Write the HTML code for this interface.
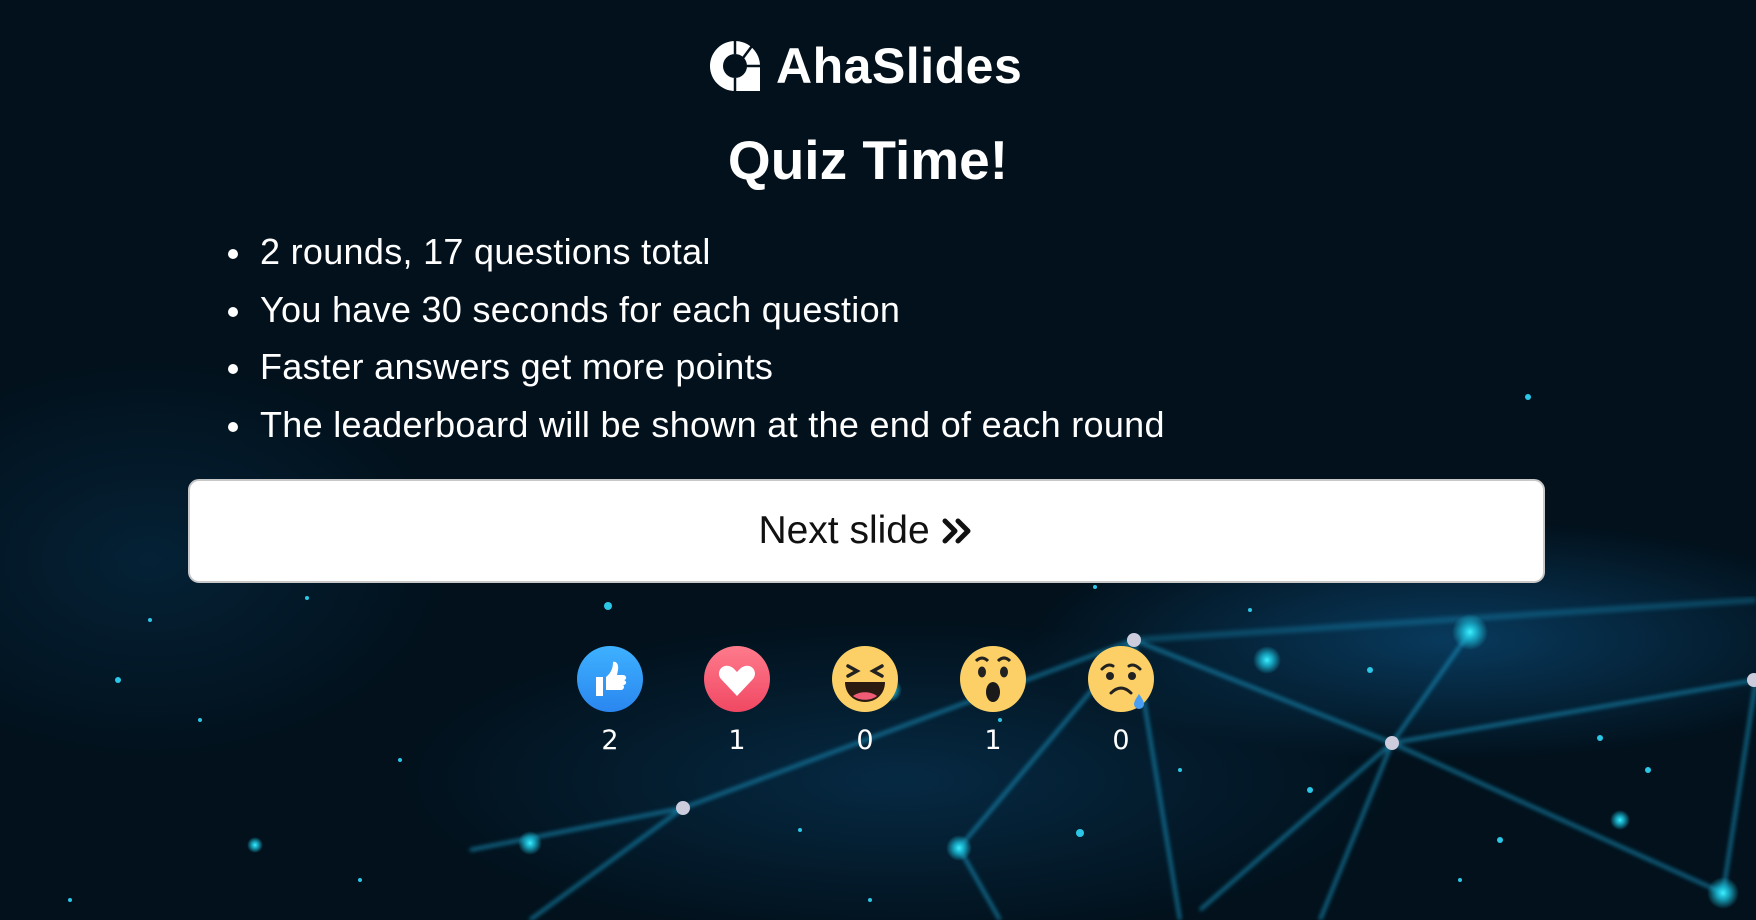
<!DOCTYPE html>
<html><head><meta charset="utf-8"><style>
html,body{margin:0;padding:0}
body{width:1756px;height:920px;overflow:hidden;position:relative;background:#02111c;font-family:"Liberation Sans",sans-serif;color:#fff}
svg.bg{position:absolute;left:0;top:0}
.logo{position:absolute;left:708px;top:36px;height:60px;display:flex;align-items:center}
.logo span{font-size:50px;font-weight:bold;margin-left:14px;letter-spacing:0.5px}
h1{position:absolute;left:0;width:1736px;text-align:center;top:128px;margin:0;font-size:55px;font-weight:bold}
ul{position:absolute;left:228px;top:226px;margin:0;padding:0;list-style:none}
li{font-size:36px;letter-spacing:0.3px;height:57.5px;line-height:52px;position:relative;padding-left:32px}
li:before{content:"";position:absolute;left:0;top:23px;width:10px;height:10px;border-radius:50%;background:#fff}
.btn{position:absolute;left:188px;top:479px;width:1353px;height:100px;background:#fff;border:2px solid #c8c8c8;border-radius:11px;color:#111;font-size:39px;display:flex;align-items:center;justify-content:center}
.em{position:absolute;top:646px;width:66px;height:66px;border-radius:50%}
.cnt{position:absolute;top:725px;width:40px;text-align:center;font-size:27px;font-family:"DejaVu Sans",sans-serif}
</style></head><body>
<svg class="bg" width="1756" height="920">
<defs>
<radialGradient id="g1" cx="0.5" cy="0.5" r="0.5"><stop offset="0" stop-color="#0b4b78" stop-opacity="0.7"/><stop offset="1" stop-color="#0b4b78" stop-opacity="0"/></radialGradient>
<radialGradient id="gd" cx="0.5" cy="0.5" r="0.5"><stop offset="0" stop-color="#3ff0ff"/><stop offset="0.4" stop-color="#1cc4e0" stop-opacity="0.8"/><stop offset="1" stop-color="#1cc4e0" stop-opacity="0"/></radialGradient>
<filter id="bl"><feGaussianBlur stdDeviation="2"/></filter>
</defs>
<ellipse cx="1450" cy="640" rx="420" ry="120" fill="url(#g1)"/>
<ellipse cx="900" cy="780" rx="500" ry="160" fill="url(#g1)" opacity="0.6"/>
<ellipse cx="150" cy="560" rx="300" ry="200" fill="url(#g1)" opacity="0.4"/>
<g stroke="#1fa8d8" stroke-width="3" opacity="0.7" fill="none" filter="url(#bl)">
<line x1="1392" y1="743" x2="1134" y2="640"/>
<line x1="1392" y1="743" x2="1756" y2="680"/>
<line x1="1392" y1="743" x2="1723" y2="893"/>
<line x1="1392" y1="743" x2="1320" y2="920"/>
<line x1="1392" y1="743" x2="1470" y2="632"/>
<line x1="1392" y1="743" x2="1200" y2="910"/>
<line x1="1756" y1="680" x2="1723" y2="893"/>
<line x1="1134" y1="640" x2="683" y2="808"/>
<line x1="1134" y1="640" x2="959" y2="848"/>
<line x1="1134" y1="640" x2="1180" y2="920"/>
<line x1="683" y1="808" x2="530" y2="920"/>
<line x1="683" y1="808" x2="470" y2="850"/>
<line x1="959" y1="848" x2="1000" y2="920"/>
</g>
<line x1="1134" y1="640" x2="1756" y2="600" stroke="#1fa8d8" stroke-width="6" opacity="0.3" filter="url(#bl)"/>
<g fill="url(#gd)">
<circle cx="1470" cy="632" r="18"/><circle cx="1267" cy="660" r="14"/><circle cx="959" cy="848" r="13"/><circle cx="1723" cy="893" r="16"/><circle cx="530" cy="843" r="12"/><circle cx="890" cy="690" r="12"/><circle cx="1620" cy="820" r="10"/><circle cx="255" cy="845" r="8"/>
</g>
<g fill="#ccd">
<circle cx="1392" cy="743" r="7"/><circle cx="1134" cy="640" r="7"/><circle cx="683" cy="808" r="7"/><circle cx="1754" cy="680" r="7"/>
</g>
<g fill="#2bc7e6">
<circle cx="1528" cy="397" r="3"/><circle cx="608" cy="606" r="4"/><circle cx="118" cy="680" r="3"/><circle cx="307" cy="598" r="2"/><circle cx="1095" cy="587" r="2"/><circle cx="1370" cy="670" r="3"/><circle cx="1600" cy="738" r="3"/><circle cx="1310" cy="790" r="3"/><circle cx="1080" cy="833" r="4"/><circle cx="1648" cy="770" r="3"/><circle cx="1500" cy="840" r="3"/><circle cx="800" cy="830" r="2"/><circle cx="400" cy="760" r="2"/><circle cx="200" cy="720" r="2"/><circle cx="70" cy="900" r="2"/><circle cx="1180" cy="770" r="2"/><circle cx="1460" cy="880" r="2"/><circle cx="1250" cy="610" r="2"/><circle cx="1000" cy="720" r="2"/><circle cx="150" cy="620" r="2"/><circle cx="360" cy="880" r="2"/><circle cx="870" cy="900" r="2"/>
</g>
</svg>
<div class="logo"><svg width="54" height="54" viewBox="0 0 54 54"><path d="M27 2A25 25 0 1 0 27 52H52V27A25 25 0 0 0 27 2ZM27 15A12 12 0 1 1 27 39A12 12 0 1 1 27 15Z" fill="#fff" fill-rule="evenodd"/><g stroke="#02111c" stroke-width="2.5"><line x1="27" y1="0" x2="27" y2="15"/><line x1="38" y1="27" x2="54" y2="27"/><line x1="27" y1="39" x2="27" y2="54"/><line x1="35" y1="19" x2="44" y2="7"/></g></svg><span>AhaSlides</span></div>
<h1>Quiz Time!</h1>
<ul>
<li>2 rounds, 17 questions total</li>
<li>You have 30 seconds for each question</li>
<li>Faster answers get more points</li>
<li>The leaderboard will be shown at the end of each round</li>
</ul>
<div class="btn">Next slide&nbsp;<svg width="34" height="30" viewBox="0 0 34 30"><path d="M4 5L14 15L4 25M17 5L27 15L17 25" stroke="#111" stroke-width="5" fill="none" stroke-linecap="round" stroke-linejoin="round"/></svg></div>
<div class="em" style="left:577px;background:linear-gradient(#3eb1ff,#2a86ef)"><svg width="66" height="66"><path d="M19 31h7v19h-7zM29 31c5-4 7-9 7-15 3-1 6 2 5 8l-1 5h6c4 0 4 5 1 5 3 1 3 5-1 5 2 1 1 5-2 5h-15z" fill="#fff"/></svg></div>
<div class="em" style="left:704px;background:linear-gradient(#ff7b8c,#f04863)"><svg width="66" height="66"><path d="M33 50L17 33c-5-6 0-15 8-13 4 1 6 4 8 6 2-2 4-5 8-6 8-2 13 7 8 13z" fill="#fff"/></svg></div>
<div class="em" style="left:832px;background:#fcd066"><svg width="66" height="66"><path d="M16 20l9 5-9 5M50 20l-9 5 9 5" stroke="#222" stroke-width="3.5" fill="none" stroke-linecap="round"/><path d="M13 36h40c0 12-9 20-20 20s-20-8-20-20z" fill="#2a1a12"/><path d="M21 50c6-5 18-5 24 0-6 5-18 5-24 0z" fill="#f05b75"/></svg></div>
<div class="em" style="left:960px;background:#fcd066"><svg width="66" height="66"><ellipse cx="22" cy="26" rx="4" ry="5.5" fill="#222"/><ellipse cx="44" cy="26" rx="4" ry="5.5" fill="#222"/><path d="M16 15q6-6 12 0M38 15q6-6 12 0" stroke="#222" stroke-width="3" fill="none"/><ellipse cx="33" cy="46" rx="7" ry="10" fill="#1a1a1a"/></svg></div>
<div class="em" style="left:1088px;background:#fcd066"><svg width="66" height="66"><circle cx="22" cy="30" r="4" fill="#222"/><circle cx="44" cy="30" r="4" fill="#222"/><path d="M14 23q6-6 11-3M52 23q-6-6-11-3M23 47q10-10 20 0" stroke="#222" stroke-width="3" fill="none" stroke-linecap="round"/><path d="M51 48q-5 7-5 10a5 5 0 0 0 10 0q0-3-5-10z" fill="#4a9ff2"/></svg></div>
<div class="cnt" style="left:590px">2</div>
<div class="cnt" style="left:717px">1</div>
<div class="cnt" style="left:845px">0</div>
<div class="cnt" style="left:973px">1</div>
<div class="cnt" style="left:1101px">0</div>
</body></html>
